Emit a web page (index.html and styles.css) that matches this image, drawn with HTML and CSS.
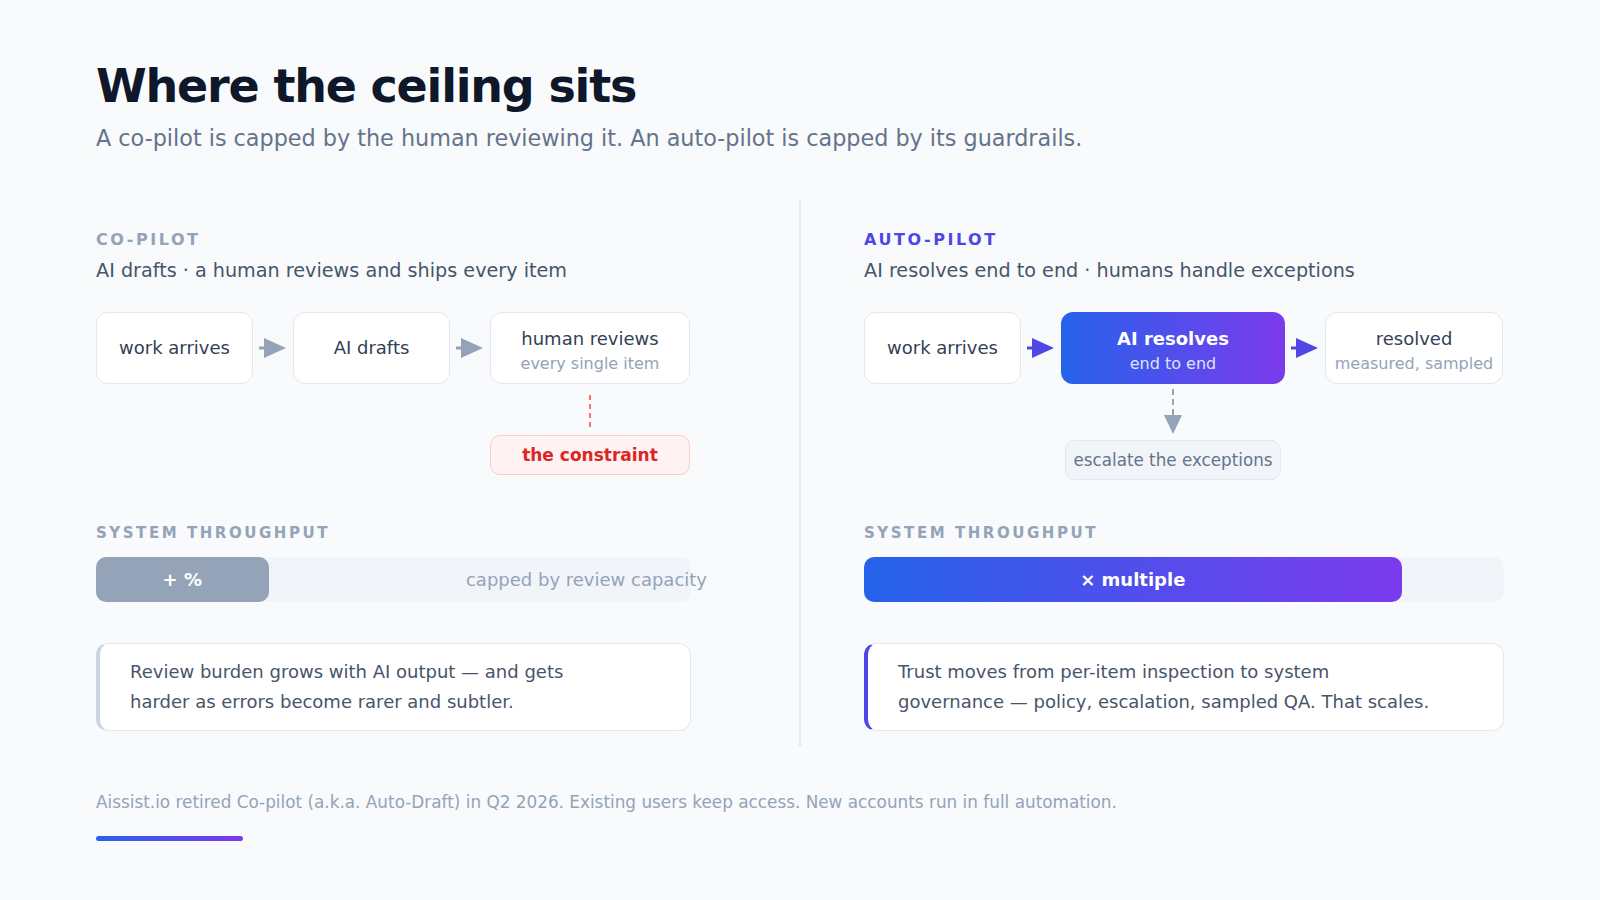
FILE: index.html
```html
<!DOCTYPE html>
<html lang="en">
<head>
<meta charset="utf-8">
<title>Where the ceiling sits</title>
<link rel="stylesheet" href="styles.css">
</head>
<body>
<div class="page">
  <h1 class="title">Where the ceiling sits</h1>
  <p class="subtitle">A co-pilot is capped by the human reviewing it. An auto-pilot is capped by its guardrails.</p>

  <div class="columns">
    <section class="col col-left">
      <div class="eyebrow eyebrow-gray">CO-PILOT</div>
      <p class="desc">AI drafts · a human reviews and ships every item</p>

      <div class="flow flow-left">
        <div class="node"><span class="node-main">work arrives</span></div>
        <div class="arrow"><svg width="28" height="22" viewBox="0 0 28 22"><line x1="0" y1="11" x2="7" y2="11" stroke="#94a3b8" stroke-width="3"/><polygon points="5,1 27,11 5,21" fill="#94a3b8"/></svg></div>
        <div class="node"><span class="node-main">AI drafts</span></div>
        <div class="arrow"><svg width="28" height="22" viewBox="0 0 28 22"><line x1="0" y1="11" x2="7" y2="11" stroke="#94a3b8" stroke-width="3"/><polygon points="5,1 27,11 5,21" fill="#94a3b8"/></svg></div>
        <div class="node node-two"><span class="node-main">human reviews</span><span class="node-sub">every single item</span></div>
        <div class="extra extra-left">
          <svg class="connector" width="2" height="34" viewBox="0 0 2 34"><line x1="1" y1="0" x2="1" y2="34" stroke="#f87171" stroke-width="2" stroke-dasharray="5 4"/></svg>
          <div class="constraint">the constraint</div>
        </div>
      </div>

      <div class="tp-label">SYSTEM THROUGHPUT</div>
      <div class="track">
        <div class="fill fill-gray" style="width:29%">+ %</div>
        <span class="track-note">capped by review capacity</span>
      </div>

      <div class="note note-gray">
        <p class="note-text">Review burden grows with AI output — and gets harder as errors become rarer and subtler.</p>
      </div>
    </section>

    <div class="divider"></div>

    <section class="col col-right">
      <div class="eyebrow eyebrow-indigo">AUTO-PILOT</div>
      <p class="desc">AI resolves end to end · humans handle exceptions</p>

      <div class="flow flow-right">
        <div class="node"><span class="node-main">work arrives</span></div>
        <div class="arrow"><svg width="28" height="22" viewBox="0 0 28 22"><line x1="0" y1="11" x2="7" y2="11" stroke="#4f46e5" stroke-width="3"/><polygon points="5,1 27,11 5,21" fill="#4f46e5"/></svg></div>
        <div class="node node-two node-ai"><span class="node-main">AI resolves</span><span class="node-sub">end to end</span></div>
        <div class="arrow"><svg width="28" height="22" viewBox="0 0 28 22"><line x1="0" y1="11" x2="7" y2="11" stroke="#4f46e5" stroke-width="3"/><polygon points="5,1 27,11 5,21" fill="#4f46e5"/></svg></div>
        <div class="node node-two"><span class="node-main">resolved</span><span class="node-sub">measured, sampled</span></div>
        <div class="extra extra-right">
          <svg class="down" width="20" height="45" viewBox="0 0 20 45"><line x1="10" y1="0" x2="10" y2="27" stroke="#94a3b8" stroke-width="2" stroke-dasharray="6 4"/><polygon points="1,26 19,26 10,45" fill="#94a3b8"/></svg>
          <div class="escalate">escalate the exceptions</div>
        </div>
      </div>

      <div class="tp-label">SYSTEM THROUGHPUT</div>
      <div class="track">
        <div class="fill fill-grad" style="width:84%">× multiple</div>
      </div>

      <div class="note note-indigo">
        <p class="note-text">Trust moves from per-item inspection to system governance — policy, escalation, sampled QA. That scales.</p>
      </div>
    </section>
  </div>

  <p class="footer">Aissist.io retired Co-pilot (a.k.a. Auto-Draft) in Q2 2026. Existing users keep access. New accounts run in full automation.</p>
  <div class="accent"></div>
</div>
</body>
</html>
```

FILE: styles.css
```css
html, body {
  margin: 0;
  padding: 0;
}

body {
  background: #f8fafc;
  font-family: "DejaVu Sans", "Noto Sans", sans-serif;
  color: #334155;
}

.page {
  width: 1600px;
  height: 900px;
  box-sizing: border-box;
  padding: 61px 96px 0;
  overflow: hidden;
}

.title {
  margin: 0;
  font-size: 46px;
  line-height: 1.1;
  font-weight: 700;
  letter-spacing: -1.2px;
  color: #0f172a;
}

.subtitle {
  margin: 11px 0 0;
  font-size: 22.3px;
  line-height: 30px;
  color: #64748b;
}

.columns {
  display: grid;
  grid-template-columns: 1fr 2px 1fr;
  column-gap: 63px;
  margin-top: 48px;
}

.divider {
  background: #e2e8f0;
}

.col {
  padding: 29.5px 0 15px;
  min-width: 0;
}

.col-left {
  max-width: 595px;
}

.eyebrow {
  font-size: 16px;
  line-height: 20px;
  font-weight: 700;
  letter-spacing: 0.16em;
}

.eyebrow-gray {
  color: #94a3b8;
}

.eyebrow-indigo {
  color: #4f46e5;
}

.desc {
  margin: 8px 0 0;
  font-size: 19.2px;
  line-height: 26px;
  color: #475569;
}

.flow {
  display: grid;
  grid-template-rows: 72px 96px;
  margin-top: 28px;
}

.flow-left {
  grid-template-columns: 157px 40px 157px 40px 200px;
}

.flow-right {
  grid-template-columns: 157px 40px 224px 40px 178px;
}

.node {
  box-sizing: border-box;
  background: #ffffff;
  border: 1px solid #e2e8f0;
  border-radius: 12px;
  display: flex;
  flex-direction: column;
  align-items: center;
  justify-content: center;
  color: #334155;
  font-size: 18px;
  white-space: nowrap;
}

.node-two {
  padding-top: 5px;
}

.node-main {
  line-height: 24px;
}

.node-sub {
  margin-top: 2px;
  font-size: 16px;
  line-height: 22px;
  color: #94a3b8;
}

.node-ai {
  border: none;
  padding-top: 6px;
  background: linear-gradient(90deg, #2563eb 0%, #7c3aed 100%);
  color: #ffffff;
}

.node-ai .node-main {
  font-weight: 700;
}

.node-ai .node-sub {
  color: #dbe4ff;
}

.arrow {
  display: flex;
  align-items: center;
  justify-content: center;
}

.arrow svg {
  display: block;
}

.extra {
  grid-row: 2;
  display: flex;
  flex-direction: column;
}

.extra-left {
  grid-column: 5;
  align-items: stretch;
  padding-top: 11px;
}

.connector {
  display: block;
  align-self: center;
}

.constraint {
  margin-top: 6px;
  height: 40px;
  box-sizing: border-box;
  background: #fef2f2;
  border: 1px solid #fecaca;
  border-radius: 10px;
  display: flex;
  align-items: center;
  justify-content: center;
  color: #dc2626;
  font-weight: 700;
  font-size: 17px;
}

.extra-right {
  grid-column: 3;
  align-items: center;
  padding-top: 5px;
}

.down {
  display: block;
}

.escalate {
  margin-top: 6px;
  height: 40px;
  box-sizing: border-box;
  padding: 0 7px;
  background: #f1f5f9;
  border: 1px solid #e2e8f0;
  border-radius: 10px;
  display: flex;
  align-items: center;
  color: #64748b;
  font-size: 16.75px;
  white-space: nowrap;
}

.tp-label {
  margin-top: 43px;
  font-size: 15px;
  line-height: 20px;
  font-weight: 700;
  letter-spacing: 0.17em;
  color: #94a3b8;
}

.track {
  margin-top: 14px;
  height: 45px;
  background: #f1f5f9;
  border-radius: 10px;
  display: flex;
  align-items: center;
}

.fill {
  height: 100%;
  border-radius: 10px;
  display: flex;
  align-items: center;
  justify-content: center;
  color: #ffffff;
  font-weight: 700;
  font-size: 18px;
}

.fill-gray {
  background: #94a3b8;
}

.fill-grad {
  background: linear-gradient(90deg, #2563eb 0%, #7c3aed 100%);
}

.track-note {
  margin-left: auto;
  margin-right: -16px;
  font-size: 18px;
  color: #94a3b8;
  white-space: nowrap;
}

.note {
  margin-top: 41px;
  background: #ffffff;
  border: 1px solid #e2e8f0;
  border-left-width: 4px;
  border-radius: 12px;
  padding: 13px 72px 13px 30px;
}

.note-gray {
  border-left-color: #cbd5e1;
}

.note-indigo {
  border-left-color: #4f46e5;
}

.note-text {
  margin: 0;
  font-size: 18px;
  line-height: 30px;
  color: #475569;
}

.footer {
  margin: 44px 0 0;
  font-size: 16.85px;
  line-height: 24px;
  color: #94a3b8;
}

.accent {
  margin-top: 22px;
  width: 147px;
  height: 5px;
  border-radius: 3px;
  background: linear-gradient(90deg, #2563eb 0%, #7c3aed 100%);
}
```
